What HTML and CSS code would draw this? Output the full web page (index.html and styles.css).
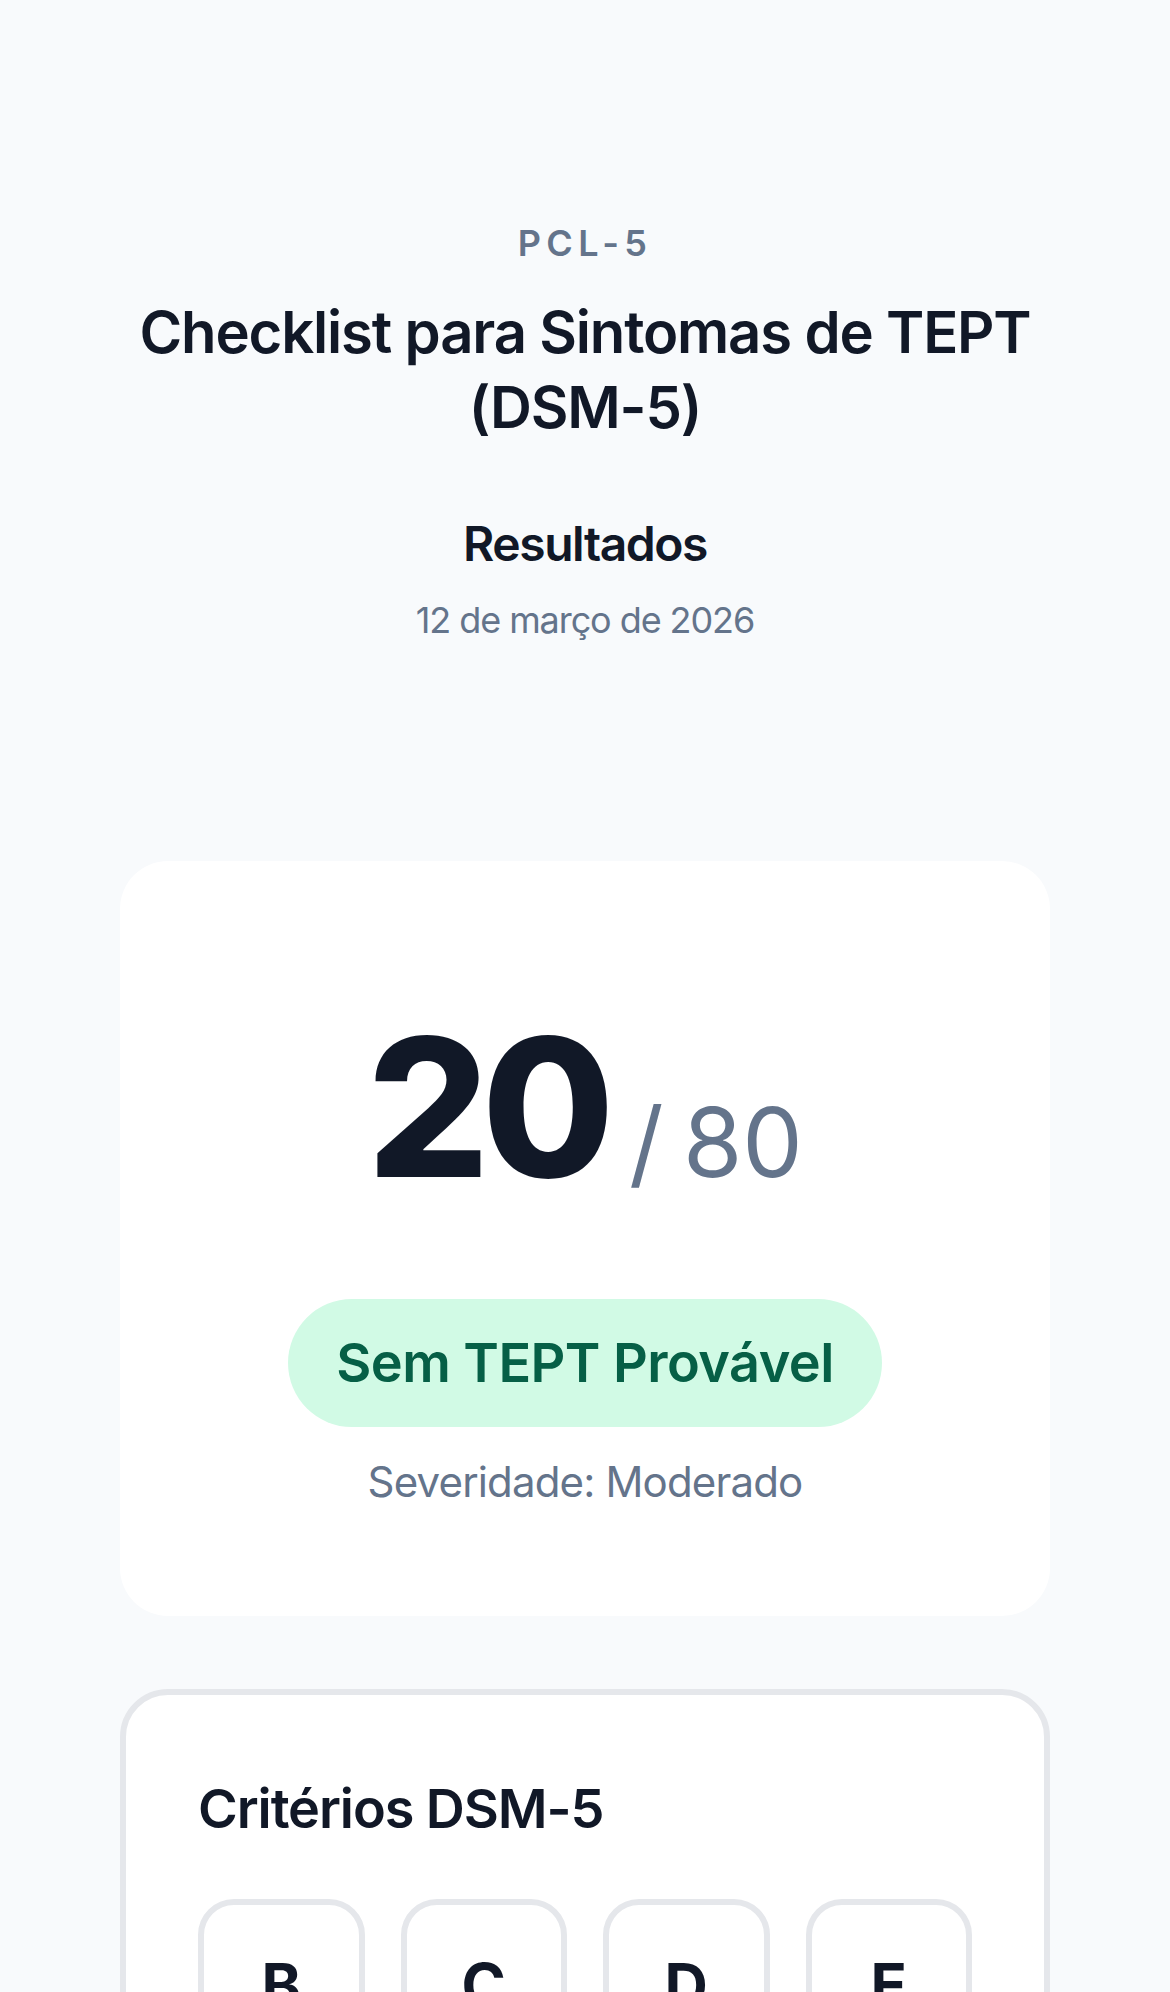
FILE: index.html
```html
<!DOCTYPE html>
<html lang="pt-BR">
<head>
    <meta charset="utf-8">
    <title>PCL-5 - Resultados</title>
    <link rel="stylesheet" href="styles.css">
</head>
<body>
    <div class="page">
        <header class="header">
            <p class="eyebrow">PCL-5</p>
            <h1 class="title">Checklist para Sintomas de TEPT (DSM-5)</h1>
            <h2 class="subtitle">Resultados</h2>
            <p class="date">12 de março de 2026</p>
        </header>

        <section class="score-card">
            <div class="score">
                <span class="score-value">20</span>
                <span class="score-max">/ 80</span>
            </div>
            <div class="badge">Sem TEPT Provável</div>
            <p class="severity">Severidade: Moderado</p>
        </section>

        <section class="criteria-card">
            <h3 class="criteria-title">Critérios DSM-5</h3>
            <div class="criteria-grid">
                <div class="criterion">
                    <span class="criterion-letter">B</span>
                    <span class="criterion-name">Intrusão</span>
                    <span class="criterion-count">1 / 5</span>
                </div>
                <div class="criterion">
                    <span class="criterion-letter">C</span>
                    <span class="criterion-name">Evitação</span>
                    <span class="criterion-count">0 / 2</span>
                </div>
                <div class="criterion">
                    <span class="criterion-letter">D</span>
                    <span class="criterion-name">Cognição</span>
                    <span class="criterion-count">1 / 7</span>
                </div>
                <div class="criterion">
                    <span class="criterion-letter">E</span>
                    <span class="criterion-name">Excitação</span>
                    <span class="criterion-count">1 / 6</span>
                </div>
            </div>
        </section>
    </div>
</body>
</html>
```

FILE: styles.css
```css
body {
    margin: 0;
    background-color: #f8fafc;
    font-family: Inter, "Noto Sans", sans-serif;
    color: #111827;
}
.page {
    padding: 0 120px 120px;
}
.header {
    text-align: center;
    padding-top: 219px;
    padding-bottom: 217px;
}
.eyebrow {
    margin: 0;
    font-size: 36px;
    line-height: 48px;
    font-weight: 600;
    letter-spacing: 0.15em;
    color: #64748b;
}
.title {
    margin: 28px auto 0;
    max-width: 930px;
    font-size: 58px;
    line-height: 75px;
    font-weight: 600;
    letter-spacing: -0.02em;
    color: #111827;
}
.subtitle {
    margin: 67px 0 0;
    font-size: 48px;
    line-height: 64px;
    font-weight: 600;
    letter-spacing: -0.03em;
}
.date {
    margin: 20px 0 0;
    font-size: 36px;
    line-height: 48px;
    letter-spacing: -0.03em;
    color: #64748b;
}
.score-card {
    background-color: #fff;
    border-radius: 48px;
    padding: 150px 72px 106px;
    display: flex;
    flex-direction: column;
    align-items: center;
}
.score {
    display: flex;
    align-items: baseline;
    justify-content: center;
    gap: 22px;
}
.score-value {
    font-size: 192px;
    line-height: 1;
    font-weight: 800;
    letter-spacing: -0.04em;
    color: #111827;
}
.score-max {
    font-size: 96px;
    line-height: 1;
    word-spacing: -0.08em;
    color: #64748b;
}
.badge {
    margin-top: 96px;
    padding: 22px 48px;
    border-radius: 9999px;
    background-color: #d1fae5;
    color: #065f46;
    font-size: 54px;
    line-height: 84px;
    font-weight: 600;
    letter-spacing: -0.01em;
}
.severity {
    margin: 27px 0 0;
    font-size: 42px;
    line-height: 56px;
    letter-spacing: -0.02em;
    color: #64748b;
}
.criteria-card {
    margin-top: 73px;
    background-color: #fff;
    border: 6px solid #e5e7eb;
    border-radius: 48px;
    padding: 72px;
}
.criteria-title {
    margin: 0 0 48px;
    font-size: 54px;
    line-height: 84px;
    font-weight: 600;
    letter-spacing: -0.02em;
}
.criteria-grid {
    display: grid;
    grid-template-columns: repeat(4, minmax(0, 1fr));
    gap: 36px;
}
.criterion {
    border: 6px solid #e5e7eb;
    border-radius: 36px;
    padding: 44px 12px 40px;
    display: flex;
    flex-direction: column;
    align-items: center;
}
.criterion-letter {
    font-size: 60px;
    line-height: 72px;
    font-weight: 700;
}
.criterion-name {
    margin-top: 12px;
    font-size: 30px;
    line-height: 44px;
    color: #64748b;
}
.criterion-count {
    margin-top: 12px;
    font-size: 42px;
    line-height: 56px;
    font-weight: 600;
}
```
